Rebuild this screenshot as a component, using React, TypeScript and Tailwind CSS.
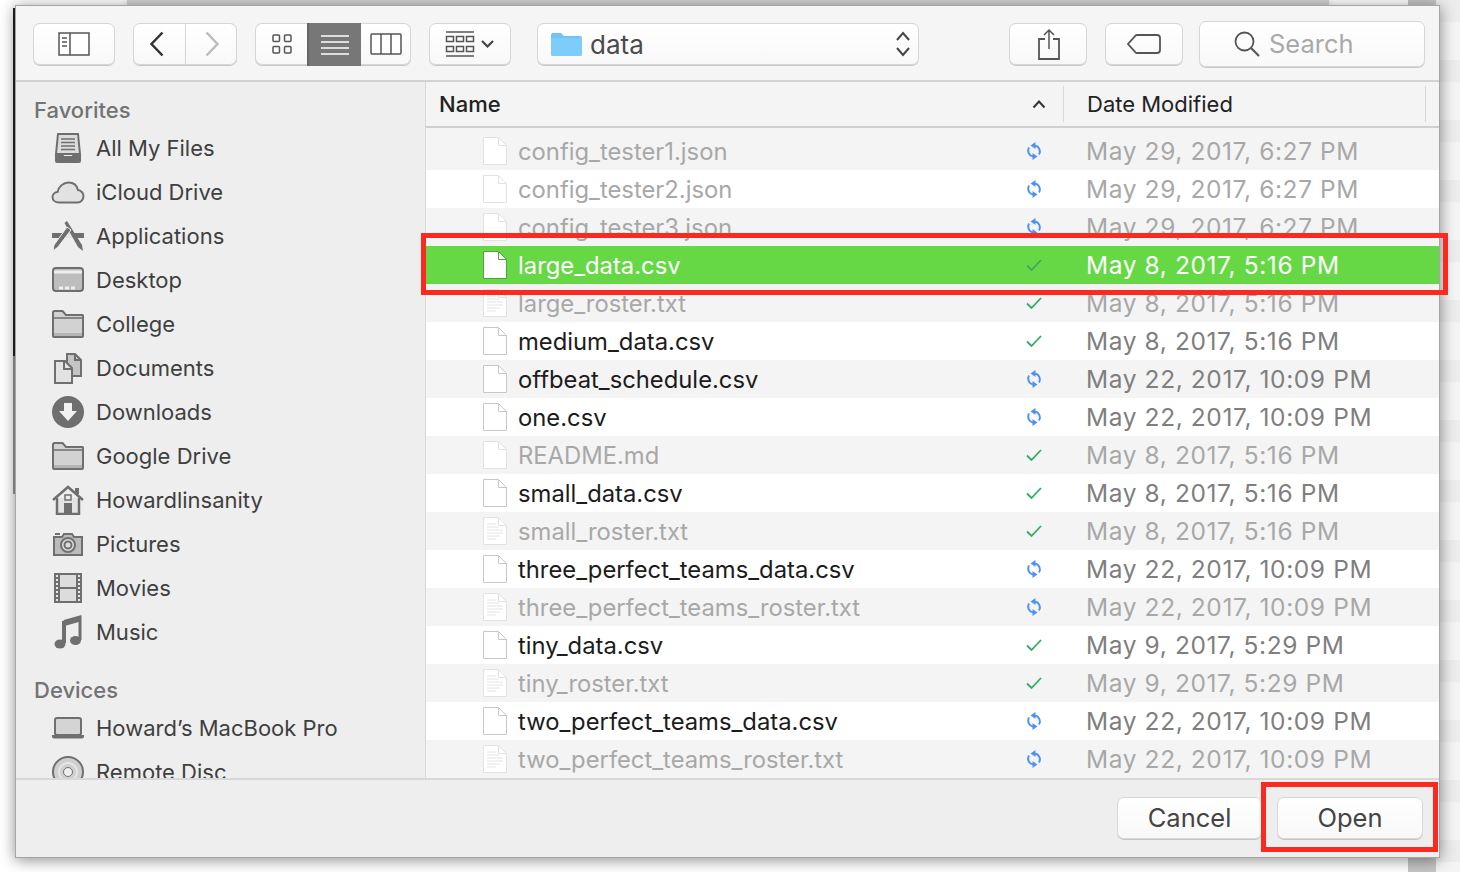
import type { ReactNode } from 'react';

const font = { fontFamily: 'Inter, "Liberation Sans", sans-serif' };

type Row = { name: string; date: string; dim?: boolean; sync?: boolean; selected?: boolean; txt?: boolean };

const rows: Row[] = [
  { name: 'config_tester1.json', date: 'May 29, 2017, 6:27 PM', dim: true, sync: true },
  { name: 'config_tester2.json', date: 'May 29, 2017, 6:27 PM', dim: true, sync: true },
  { name: 'config_tester3.json', date: 'May 29, 2017, 6:27 PM', dim: true, sync: true },
  { name: 'large_data.csv', date: 'May 8, 2017, 5:16 PM', selected: true },
  { name: 'large_roster.txt', date: 'May 8, 2017, 5:16 PM', dim: true, txt: true },
  { name: 'medium_data.csv', date: 'May 8, 2017, 5:16 PM' },
  { name: 'offbeat_schedule.csv', date: 'May 22, 2017, 10:09 PM', sync: true },
  { name: 'one.csv', date: 'May 22, 2017, 10:09 PM', sync: true },
  { name: 'README.md', date: 'May 8, 2017, 5:16 PM', dim: true },
  { name: 'small_data.csv', date: 'May 8, 2017, 5:16 PM' },
  { name: 'small_roster.txt', date: 'May 8, 2017, 5:16 PM', dim: true, txt: true },
  { name: 'three_perfect_teams_data.csv', date: 'May 22, 2017, 10:09 PM', sync: true },
  { name: 'three_perfect_teams_roster.txt', date: 'May 22, 2017, 10:09 PM', dim: true, sync: true, txt: true },
  { name: 'tiny_data.csv', date: 'May 9, 2017, 5:29 PM' },
  { name: 'tiny_roster.txt', date: 'May 9, 2017, 5:29 PM', dim: true, txt: true },
  { name: 'two_perfect_teams_data.csv', date: 'May 22, 2017, 10:09 PM', sync: true },
  { name: 'two_perfect_teams_roster.txt', date: 'May 22, 2017, 10:09 PM', dim: true, sync: true, txt: true },
];

function Svg({ w, h, children }: { w: number; h: number; children: ReactNode }) {
  return (
    <svg width={w} height={h} viewBox={`0 0 ${w} ${h}`} fill="none" className="block shrink-0">
      {children}
    </svg>
  );
}

const G = '#6f6f6f';

const sidebarIcons: Record<string, ReactNode> = {
  files: (
    <Svg w={32} h={32}>
      <path d="M6 2h20l2 20H4z" fill="#dcdcdc" stroke={G} strokeWidth="2" />
      <path d="M9 7h14M9 10.500h14M9 14h14M9 17.500h14" stroke={G} strokeWidth="1.500" />
      <path d="M3 21h8l1 3h8l1-3h8v8a2 2 0 0 1-2 2H5a2 2 0 0 1-2-2z" fill={G} />
    </Svg>
  ),
  cloud: (
    <Svg w={34} h={24}>
      <path d="M8 22.500c-4 0-6.500-2.500-6.500-5.500 0-3 2.500-5 5-5 1-5 5.500-9.500 11-9.500 5 0 8.500 3 9.500 7.500 3 .3 5.500 3 5.500 6 0 3.500-2.500 6.500-6 6.500z" fill="#e2e2e2" stroke={G} strokeWidth="2" />
    </Svg>
  ),
  apps: (
    <Svg w={34} h={32}>
      <path d="M1 13h32v5H1z" fill={G} />
      <path d="M12 13h10l3 5H9z" fill="#e6e6e6" />
      <path d="M13.500 3L16 1l15 24 1 6-5-4z" fill={G} />
      <path d="M20 10L7 27l-5 4 1-6 13-18z" fill={G} stroke="#eee" strokeWidth="1" />
    </Svg>
  ),
  desktop: (
    <Svg w={32} h={26}>
      <rect x="1" y="1" width="30" height="23" rx="3" fill="#bdbdbd" stroke={G} strokeWidth="2" />
      <path d="M2 5h28" stroke="#eee" strokeWidth="3" />
      <path d="M7 21h18" stroke="#eee" strokeWidth="3" strokeDasharray="4 2" />
    </Svg>
  ),
  folder: (
    <Svg w={32} h={28}>
      <path d="M1 26V2.500C1 1.700 1.700 1 2.500 1h8L14 5h16.500c.3 0 .5.200.5.500V26a1 1 0 0 1-1 1H2a1 1 0 0 1-1-1z" fill="#d2d2d2" stroke={G} strokeWidth="2" />
      <path d="M1 8h30" stroke={G} strokeWidth="1.500" />
      <path d="M2 23h28v3H2z" fill="#b4b4b4" />
    </Svg>
  ),
  documents: (
    <Svg w={30} h={32}>
      <path d="M14 2h8l6 6v16H14z" fill="#c4c4c4" stroke={G} strokeWidth="2" />
      <path d="M22 2v6h6" stroke={G} strokeWidth="2" />
      <path d="M2 9h10l7 7v15H2z" fill="#e2e2e2" stroke={G} strokeWidth="2" />
      <path d="M11 9v8h8" stroke={G} strokeWidth="2" />
    </Svg>
  ),
  downloads: (
    <Svg w={32} h={32}>
      <circle cx="16" cy="16" r="16" fill={G} />
      <path d="M12 7h8v8h5l-9 10-9-10h5z" fill="#f2f2f2" />
    </Svg>
  ),
  home: (
    <Svg w={32} h={30}>
      <path d="M1 15L16 2l15 13" stroke={G} strokeWidth="2.500" />
      <path d="M25 3v6" stroke={G} strokeWidth="4" />
      <path d="M5 13v16h22V13" fill="#e4e4e4" stroke={G} strokeWidth="2.500" />
      <rect x="13" y="10" width="6" height="5" fill="#eee" stroke={G} strokeWidth="1.500" />
      <rect x="12" y="18" width="8" height="11" fill={G} />
    </Svg>
  ),
  pictures: (
    <Svg w={30} h={24}>
      <path d="M1 5h8l2-3h8l2 3h8v18H1z" fill="#bbb" stroke={G} strokeWidth="2" />
      <path d="M2 2h5" stroke={G} strokeWidth="2" />
      <circle cx="15" cy="13" r="7" fill="#ddd" stroke={G} strokeWidth="2" />
      <circle cx="15" cy="13" r="3.500" stroke={G} strokeWidth="2" />
    </Svg>
  ),
  movies: (
    <Svg w={28} h={30}>
      <rect width="28" height="30" fill={G} />
      <rect x="6" y="2" width="16" height="12" fill="#dcdcdc" />
      <rect x="6" y="16" width="16" height="12" fill="#dcdcdc" />
      <path d="M3 2v26M25 2v26" stroke="#e8e8e8" strokeWidth="2" strokeDasharray="2 2" />
    </Svg>
  ),
  music: (
    <Svg w={28} h={34}>
      <path d="M10 6.500L26 2v23" stroke={G} strokeWidth="3" />
      <path d="M10 6v22M10 9l16-4.500" stroke={G} strokeWidth="4" />
      <ellipse cx="6" cy="29" rx="5.500" ry="4.500" fill={G} />
      <ellipse cx="21.500" cy="25.500" rx="5.500" ry="4.500" fill={G} />
    </Svg>
  ),
  laptop: (
    <Svg w={32} h={22}>
      <rect x="3" y="1" width="26" height="17" rx="2" fill="#d4d4d4" stroke={G} strokeWidth="2" />
      <path d="M0 18h32v1.500a2 2 0 0 1-2 2H2a2 2 0 0 1-2-2z" fill={G} />
    </Svg>
  ),
  disc: (
    <Svg w={32} h={32}>
      <circle cx="16" cy="16" r="15" fill="#cfcfcf" stroke={G} strokeWidth="2" />
      <circle cx="16" cy="16" r="9" stroke="#e6e6e6" strokeWidth="2" />
      <circle cx="16" cy="16" r="4.500" fill="#eee" stroke={G} strokeWidth="1" />
    </Svg>
  ),
};

const favorites: [string, string][] = [
  ['files', 'All My Files'],
  ['cloud', 'iCloud Drive'],
  ['apps', 'Applications'],
  ['desktop', 'Desktop'],
  ['folder', 'College'],
  ['documents', 'Documents'],
  ['downloads', 'Downloads'],
  ['folder', 'Google Drive'],
  ['home', 'Howardlinsanity'],
  ['pictures', 'Pictures'],
  ['movies', 'Movies'],
  ['music', 'Music'],
];

function SidebarItem({ icon, label }: { icon: string; label: string }) {
  return (
    <div className="flex h-[44px] items-center pl-[36px] text-[22px] text-[#3f3f3f]">
      <div className="flex h-[34px] w-[34px] shrink-0 items-center justify-center">{sidebarIcons[icon]}</div>
      <span className="ml-[11px] whitespace-nowrap">{label}</span>
    </div>
  );
}

function FileIcon({ dim, txt, selected }: { dim?: boolean; txt?: boolean; selected?: boolean }) {
  const edge = selected ? '#4aa83a' : dim ? '#e2e2e2' : '#c8c8c8';
  return (
    <Svg w={26} h={30}>
      <path d="M1.500 1.500h15l8 8v19h-23z" fill="#fff" stroke={edge} strokeWidth="1" />
      <path d="M16.500 1.500v8h8" stroke={edge} strokeWidth="1" />
      {txt && <path d="M5 8h9M5 11h12M5 14h16M5 17h16M5 20h13M5 23h9" stroke="#e4e4e4" strokeWidth="1" />}
    </Svg>
  );
}

function SyncIcon() {
  return (
    <Svg w={16} h={18}>
      <path d="M9 3.500A6 6 0 0 1 13 12.500M7 14.500A6 6 0 0 1 3 5.500" stroke="#4f93f2" strokeWidth="2" />
      <path d="M9.500 0v7L4.500 3.500zM6.500 18v-7l5 3.500z" fill="#4f93f2" />
    </Svg>
  );
}

function CheckIcon({ selected }: { selected?: boolean }) {
  return (
    <Svg w={16} h={12}>
      <path d="M1 6.500L5.500 11 15 1" stroke={selected ? '#3fa866' : '#2fae62'} strokeWidth="1.800" />
    </Svg>
  );
}

function FileRow({ row, index }: { row: Row; index: number }) {
  const bg = row.selected ? 'bg-[#66d846]' : index % 2 === 0 ? 'bg-[#f4f4f4]' : 'bg-white';
  const nameColor = row.selected ? 'text-white' : row.dim ? 'text-[#a8a8a8]' : 'text-[#1c1c1c]';
  const dateColor = row.selected ? 'text-white' : row.dim ? 'text-[#a8a8a8]' : 'text-[#7f7f7f]';
  return (
    <div className={`flex h-[38px] items-center ${bg}`}>
      <div className="ml-[56px] w-[36px] shrink-0">
        <FileIcon dim={row.dim} txt={row.txt} selected={row.selected} />
      </div>
      <span className={`min-w-0 flex-1 whitespace-nowrap pt-[2px] text-[23.800px] ${nameColor}`}>{row.name}</span>
      <div className="flex w-[16px] shrink-0 justify-center">
        {row.sync ? <SyncIcon /> : <CheckIcon selected={row.selected} />}
      </div>
      <span className={`ml-[44px] w-[354px] shrink-0 whitespace-nowrap text-[24.500px] tracking-[0.6px] ${dateColor}`}>
        {row.date}
      </span>
    </div>
  );
}

function ToolButton({ className, children }: { className: string; children: ReactNode }) {
  return (
    <div
      className={`flex h-[42px] items-center justify-center rounded-[7px] border border-[#d6d6d6] bg-gradient-to-b from-white to-[#f8f8f8] shadow-[0_1px_0_#c8c8c8] ${className}`}
    >
      {children}
    </div>
  );
}

function Toolbar() {
  return (
    <div className="flex h-[77px] items-start border-b-2 border-[#d2d2d2] bg-[#f5f5f5] pl-[18px] pt-[18px]">
      <ToolButton className="w-[82px]">
        <Svg w={32} h={24}>
          <rect x="1" y="1" width="30" height="22" fill="#fff" stroke="#555" strokeWidth="1.500" />
          <path d="M12 1v22" stroke="#555" strokeWidth="1.500" />
          <path d="M4 6h5M4 10h5M4 14h5" stroke="#555" strokeWidth="1.500" />
        </Svg>
      </ToolButton>
      <ToolButton className="ml-[18px] w-[53px] rounded-r-none pr-[5px]">
        <Svg w={16} h={26}>
          <path d="M13.500 1.500L2.500 13l11 11.500" stroke="#333" strokeWidth="2.500" />
        </Svg>
      </ToolButton>
      <ToolButton className="w-[51px] rounded-l-none border-l-0 pl-[1px]">
        <Svg w={16} h={26}>
          <path d="M2.500 1.500l11 11.500-11 11.500" stroke="#bcbcbc" strokeWidth="2.500" />
        </Svg>
      </ToolButton>
      <div className="ml-[18px] flex">
        <ToolButton className="w-[52px] rounded-r-none border-r-0">
          <Svg w={20} h={20}>
            <rect x="1" y="1" width="6.500" height="6.500" rx="1" stroke="#555" strokeWidth="1.500" />
            <rect x="12.500" y="1" width="6.500" height="6.500" rx="1" stroke="#555" strokeWidth="1.500" />
            <rect x="1" y="12.500" width="6.500" height="6.500" rx="1" stroke="#555" strokeWidth="1.500" />
            <rect x="12.500" y="12.500" width="6.500" height="6.500" rx="1" stroke="#555" strokeWidth="1.500" />
          </Svg>
        </ToolButton>
        <div className="flex h-[43px] w-[54px] items-center justify-center border-l-2 border-[#666] bg-[#777]">
          <Svg w={30} h={22}>
            <path d="M1 2h28M1 8h28M1 14h28M1 20h28" stroke="#fff" strokeWidth="1.500" />
          </Svg>
        </div>
        <ToolButton className="w-[50px] rounded-l-none border-l-0">
          <Svg w={32} h={22}>
            <rect x="1" y="1" width="30" height="20" rx="1" fill="#fff" stroke="#555" strokeWidth="1.500" />
            <path d="M11 1v20M21 1v20" stroke="#555" strokeWidth="1.500" />
          </Svg>
        </ToolButton>
      </div>
      <ToolButton className="ml-[18px] w-[82px]">
        <Svg w={50} h={26}>
          <path d="M1 1h28M1 25h28" stroke="#555" strokeWidth="1.500" />
          <path d="M1.500 5.500h7v5h-7zM11.500 5.500h7v5h-7zM21.500 5.500h7v5h-7zM1.500 15.500h7v5h-7zM11.500 15.500h7v5h-7zM21.500 15.500h7v5h-7z" stroke="#555" strokeWidth="1.500" />
          <path d="M37 10l5.500 5.500L48 10" stroke="#444" strokeWidth="2.200" />
        </Svg>
      </ToolButton>
      <ToolButton className="ml-[26px] w-[382px] !justify-start pl-[13px]">
        <Svg w={31} h={23}>
          <path d="M0 21V2a2 2 0 0 1 2-2h8l3 3h16a2 2 0 0 1 2 2v16a2 2 0 0 1-2 2H2a2 2 0 0 1-2-2z" fill="#6ec3f7" />
          <path d="M0 5h31v16a2 2 0 0 1-2 2H2a2 2 0 0 1-2-2z" fill="#7dcdfb" />
        </Svg>
        <span className="ml-[8px] flex-1 text-[26px] text-[#4a4a4a]">data</span>
        <div className="mr-[7px]">
          <Svg w={16} h={28}>
            <path d="M2 10l6-7 6 7M2 18l6 7 6-7" stroke="#444" strokeWidth="2" />
          </Svg>
        </div>
      </ToolButton>
      <ToolButton className="ml-[90px] w-[78px] pl-[1px]">
        <Svg w={24} h={32}>
          <path d="M8 11H2v20h20V11h-6" stroke="#555" strokeWidth="1.800" />
          <path d="M12 21V2M7 7l5-5 5 5" stroke="#555" strokeWidth="1.500" />
        </Svg>
      </ToolButton>
      <ToolButton className="ml-[18px] w-[78px]">
        <Svg w={34} h={20}>
          <path d="M10 1h20a3 3 0 0 1 3 3v12a3 3 0 0 1-3 3H10a2 2 0 0 1-1.500-.6L1 10l7.500-8.400A2 2 0 0 1 10 1z" stroke="#555" strokeWidth="1.800" />
        </Svg>
      </ToolButton>
      <div className="ml-[16px] -mt-[2px] flex h-[46px] w-[226px] items-center rounded-[7px] border border-[#d6d6d6] bg-gradient-to-b from-white to-[#f8f8f8] pl-[34px] shadow-[0_1px_0_#c8c8c8]">
        <Svg w={26} h={26}>
          <circle cx="10.500" cy="10.500" r="9" stroke="#555" strokeWidth="1.800" />
          <path d="M17 17l8 8" stroke="#555" strokeWidth="2.200" />
        </Svg>
        <span className="ml-[9px] text-[25.500px] text-[#a9a9a9]">Search</span>
      </div>
    </div>
  );
}

function DialogButton({ label, className }: { label: string; className: string }) {
  return (
    <div
      className={`flex h-[42px] items-center justify-center rounded-[7px] border border-[#d8d8d8] bg-gradient-to-b from-white to-[#f8f8f8] text-[25.500px] text-[#444] shadow-[0_1px_0_#c4c4c4] ${className}`}
    >
      {label}
    </div>
  );
}

export default function App() {
  return (
    <div className="relative h-[872px] w-[1460px] overflow-hidden bg-white pl-[15px] pt-[5px]" style={font}>
      {/* windows behind the dialog */}
      <div className="absolute left-[127px] top-0 h-[6px] w-[1202px] border-b border-[#9a9a9a] bg-[#d4d4d4] shadow-[0_2px_6px_rgba(0,0,0,0.2)]" />
      <div className="absolute left-[1408px] top-0 h-[872px] w-[28px] bg-[#c6c6c6]" />
      <div className="absolute left-[1436px] top-0 h-[872px] w-[24px] bg-[repeating-linear-gradient(180deg,#ececec_0px,#ececec_22px,#f4f4f4_22px,#f4f4f4_60px)]" />
      <div className="absolute left-[13px] top-[8px] h-[348px] w-[3px] bg-[#222]" />
      <div className="absolute left-[13px] top-[356px] h-[138px] w-[3px] bg-[#999]" />

      <div className="relative flex h-[853px] w-[1425px] flex-col bg-[#eee] shadow-[0_2px_14px_rgba(0,0,0,0.45)] outline outline-1 -outline-offset-1 outline-[#a6a6a6]">
        <Toolbar />
        <div className="flex h-[698px] overflow-hidden border-b-2 border-[#d8d8d8]">
          <div className="w-[410px] shrink-0 overflow-hidden bg-[#eee] pt-[13px]">
            <div className="flex h-[30px] items-center pl-[19px] text-[22px] font-medium text-[#737373]">Favorites</div>
            <div className="mt-[1px]">
              {favorites.map(([icon, label]) => (
                <SidebarItem key={label} icon={icon} label={label} />
              ))}
            </div>
            <div className="mt-[21px] flex h-[30px] items-center pl-[19px] text-[22px] font-medium text-[#737373]">Devices</div>
            <div className="mt-[1px]">
              <SidebarItem icon="laptop" label="Howard’s MacBook Pro" />
              <SidebarItem icon="disc" label="Remote Disc" />
            </div>
          </div>
          <div className="min-w-0 flex-1 border-l border-[#d8d8d8] bg-[#f4f4f4]">
            <div className="flex h-[46px] items-center border-b-2 border-[#cfcfcf] text-[22px] text-[#222]">
              <span className="ml-[13px] flex-1 font-medium">Name</span>
              <Svg w={14} h={10}>
                <path d="M1.500 8.500L7 2.500l5.500 6" stroke="#333" strokeWidth="2" />
              </Svg>
              <div className="ml-[17px] h-[36px] w-px bg-[#d8d8d8]" />
              <span className="ml-[23px] w-[338px]">Date Modified</span>
              <div className="h-[36px] w-px bg-[#d8d8d8]" />
              <div className="w-[14px]" />
            </div>
            <div className="pt-[4px]">
              {rows.map((row, i) => (
                <FileRow key={row.name} row={row} index={i} />
              ))}
            </div>
          </div>
        </div>
        <div className="flex flex-1 items-start bg-[#eee] pl-[1102px] pt-[17px]">
          <DialogButton label="Cancel" className="w-[145px]" />
          <DialogButton label="Open" className="ml-[15px] w-[146px]" />
        </div>
      </div>

      {/* red annotation boxes */}
      <div className="absolute left-[421px] top-[233px] h-[62px] w-[1027px] border-[5px] border-[#fb2a20]" />
      <div className="absolute left-[1261px] top-[782px] h-[70px] w-[177px] border-[5px] border-[#fb2a20]" />
    </div>
  );
}
